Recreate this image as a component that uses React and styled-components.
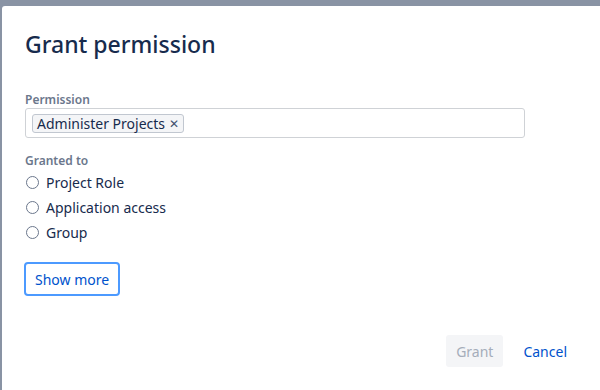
import React, { useState } from 'react';
import styled, { createGlobalStyle } from 'styled-components';

const GlobalStyle = createGlobalStyle`
  html, body {
    margin: 0;
    padding: 0;
    background: #8993a4;
    font-family: "Noto Sans", "Open Sans", sans-serif;
    color: #172b4d;
  }
`

const Backdrop = styled.div`
  width: 600px;
  height: 390px;
  overflow: hidden;
  background: #8993a4;
  padding: 6px 0 0 2px;
  box-sizing: border-box;
`

const Dialog = styled.div`
  background: #fff;
  border-radius: 3px 0 0 0;
  height: 420px;
  padding: 24px 23px 0 23px;
  box-sizing: border-box;
  display: flex;
  flex-direction: column;
`

const Title = styled.h1`
  margin: 0;
  font-size: 23px;
  font-weight: 500;
  line-height: 28px;
  color: #172b4d;
`

const Field = styled.div`
  margin-top: ${p => p.$top}px;
  display: flex;
  flex-direction: column;
`

const Label = styled.label`
  font-size: 12px;
  font-weight: 600;
  line-height: 16px;
  color: #6b778c;
`

const MultiSelect = styled.div`
  width: 500px;
  height: 30px;
  box-sizing: border-box;
  border: 1px solid #cfd2d6;
  border-radius: 3px;
  display: flex;
  align-items: center;
  padding: 0 6px;
`

const Chip = styled.span`
  display: inline-flex;
  align-items: center;
  gap: 4px;
  height: 19px;
  box-sizing: border-box;
  padding: 0 4px;
  border: 1px solid #c1c7d0;
  border-radius: 3px;
  background: #f4f5f7;
  font-size: 14px;
  color: #172b4d;
`

const ChipX = styled.span`
  font-size: 12px;
  color: #42526e;
`

const RadioList = styled.div`
  margin-top: 3px;
  display: flex;
  flex-direction: column;
  gap: 5px;
`

const RadioRow = styled.label`
  display: flex;
  align-items: center;
  gap: 7px;
  height: 20px;
  font-size: 14px;
  color: #172b4d;
  cursor: pointer;
`

const RadioCircle = styled.span`
  width: 11px;
  height: 11px;
  margin-left: 1px;
  border: 1px solid #6b778c;
  border-radius: 50%;
  background: ${p => (p.$checked ? '#0052cc' : '#fff')};
`

const ShowMore = styled.button`
  margin-top: 20px;
  align-self: flex-start;
  margin-left: -1px;
  height: 34px;
  padding: 0 9px;
  border: 2px solid #4c9aff;
  border-radius: 4px;
  background: #fff;
  color: #0052cc;
  font-family: inherit;
  font-size: 14px;
`

const Footer = styled.div`
  margin-top: 39px;
  display: flex;
  justify-content: flex-end;
  align-items: center;
  gap: 10px;
`

const FooterButton = styled.button`
  height: 32px;
  padding: 0 10px;
  border: none;
  border-radius: 3px;
  background: ${p => (p.$disabled ? '#f4f5f7' : 'transparent')};
  color: ${p => (p.$disabled ? '#a5adba' : '#0052cc')};
  font-family: inherit;
  font-size: 14px;
`

const options = ['Project Role', 'Application access', 'Group']

export default function App() {
  const [selected, setSelected] = useState(null)
  return (
    <>
      <GlobalStyle />
      <Backdrop>
        <Dialog>
          <Title>Grant permission</Title>
          <Field $top={34}>
            <Label>Permission</Label>
            <MultiSelect>
              <Chip>
                Administer Projects
                <ChipX>✕</ChipX>
              </Chip>
            </MultiSelect>
          </Field>
          <Field $top={15}>
            <Label>Granted to</Label>
            <RadioList>
              {options.map(opt => (
                <RadioRow key={opt} onClick={() => setSelected(opt)}>
                  <RadioCircle $checked={selected === opt} />
                  {opt}
                </RadioRow>
              ))}
            </RadioList>
          </Field>
          <ShowMore>Show more</ShowMore>
          <Footer>
            <FooterButton $disabled>Grant</FooterButton>
            <FooterButton>Cancel</FooterButton>
          </Footer>
        </Dialog>
      </Backdrop>
    </>
  )
}
